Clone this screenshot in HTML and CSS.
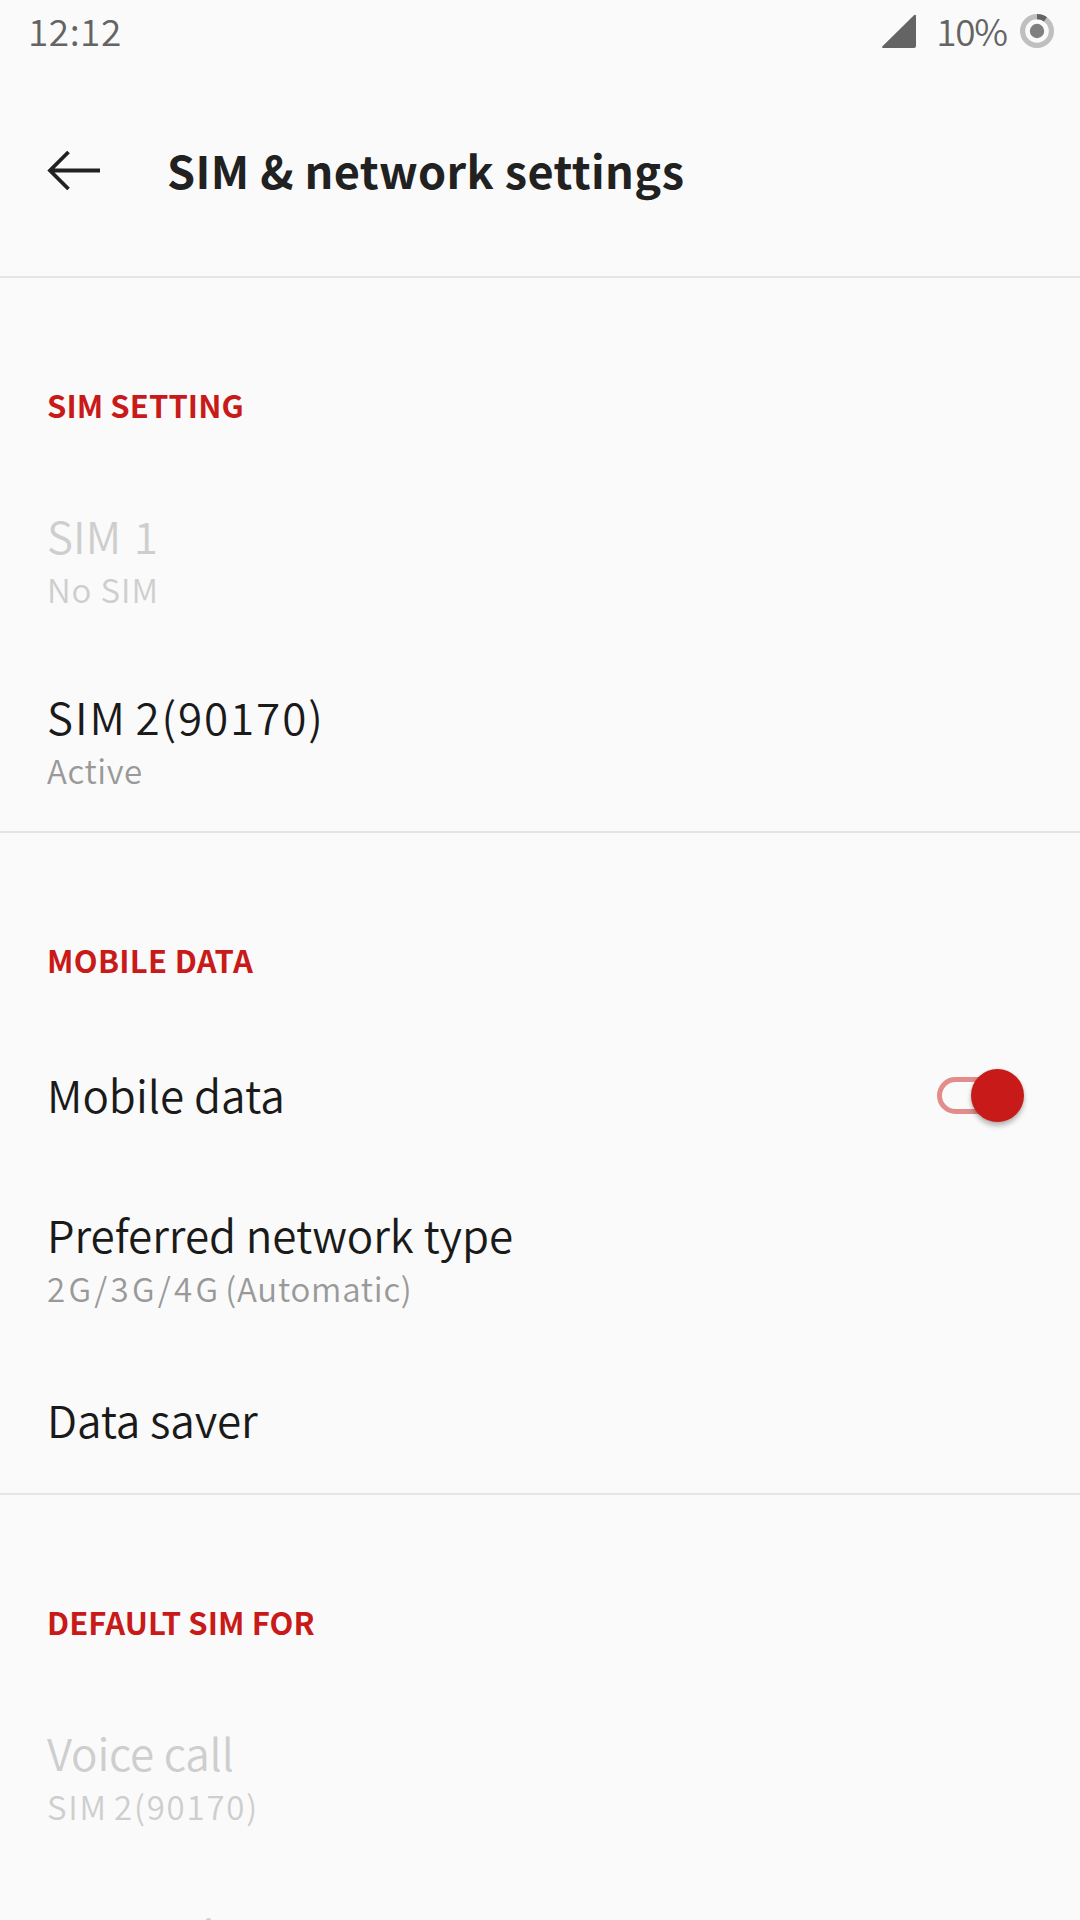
FILE: index.html
```html
<!DOCTYPE html>
<html lang="en">
<head>
<meta charset="utf-8">
<title>SIM &amp; network settings</title>
<link rel="stylesheet" href="styles.css">
</head>
<body>
<div class="screen">
  <div class="status-bar">
    <span class="clock">12:12</span>
    <div class="status-icons">
      <svg class="signal" width="36" height="36" viewBox="0 0 36 36"><path d="M33.2 1.1 L1.5 32.2 Q0.4 34 2.4 34 H33 Q35 34 35 32 V1.8 Q34.600 0 33.200 1.100 Z" fill="#646464"/></svg>
      <span class="percent">10%</span>
      <svg class="battery" width="34" height="34" viewBox="0 0 34 34">
        <circle cx="17" cy="17" r="14.400" fill="none" stroke="#bfbfbf" stroke-width="5.200"/>
        <path d="M17 2.600 A14.400 14.400 0 0 1 25.460 5.350" fill="none" stroke="#646464" stroke-width="5.200"/>
        <circle cx="17" cy="17" r="7.200" fill="#7f7f7f"/>
      </svg>
    </div>
  </div>

  <header class="app-bar">
    <svg class="back" width="54" height="42" viewBox="0 0 54 42"><path d="M3 21.500 H53 M21.500 3 L3 21.500 L21.500 40" fill="none" stroke="#212121" stroke-width="3.800"/></svg>
    <h1 class="page-title">SIM &amp; network settings</h1>
  </header>

  <section class="group">
    <h2 class="heading">SIM SETTING</h2>
    <div class="item disabled">
      <div class="label sim-slot">SIM 1</div>
      <div class="summary"><span class="sim-name">No SIM</span></div>
    </div>
    <div class="item">
      <div class="label sim-number">SIM 2(90170)</div>
      <div class="summary">Active</div>
    </div>
  </section>

  <section class="group">
    <h2 class="heading wide">MOBILE DATA</h2>
    <div class="item single">
      <div class="label">Mobile data</div>
      <div class="switch"><div class="track"></div><div class="thumb"></div></div>
    </div>
    <div class="item">
      <div class="label network">Preferred network type</div>
      <div class="summary"><span class="modes">2G/3G/4G</span> <span class="auto">(Automatic)</span></div>
    </div>
    <div class="item single">
      <div class="label saver">Data saver</div>
    </div>
  </section>

  <section class="group last">
    <h2 class="heading">DEFAULT SIM FOR</h2>
    <div class="item disabled">
      <div class="label voice">Voice call</div>
      <div class="summary sim-number">SIM 2(90170)</div>
    </div>
    <div class="item disabled">
      <div class="label messaging">Messaging</div>
    </div>
  </section>
</div>
</body>
</html>
```
FILE: styles.css
```css
* {
  box-sizing: border-box;
  margin: 0;
}

body {
  background: #fafafa;
  color: #1a1a1a;
  font-family: "Noto Sans CJK SC", "Noto Sans", sans-serif;
  font-weight: 350;
}

.screen {
  height: 1920px;
  overflow: hidden;
}

.status-bar {
  display: flex;
  justify-content: space-between;
  height: 60px;
  padding: 0 26px 0 28px;
  color: #646464;
  font-size: 37px;
  line-height: 60px;
}

.clock {
  letter-spacing: 0.5px;
}

.status-icons {
  display: flex;
}

.signal {
  margin: 14px 19px 0 0;
}

.percent {
  margin-right: 13px;
  letter-spacing: -1.2px;
}

.battery {
  margin-top: 14px;
}

.app-bar {
  display: flex;
  align-items: center;
  height: 218px;
  padding: 3px 47px 0;
  border-bottom: 2px solid #e5e5e5;
}

.page-title {
  margin-left: 66px;
  color: #212121;
  font-size: 45px;
  font-weight: 700;
  line-height: 60px;
  letter-spacing: 0.4px;
}

.group {
  padding: 103px 56px 0 47px;
  border-bottom: 2px solid #e5e5e5;
}

.group.last {
  border-bottom: 0;
}

.heading {
  margin: 0 0 40px;
  color: #c81a19;
  font-size: 31px;
  font-weight: 700;
  line-height: 48px;
  letter-spacing: 0.08px;
}

.heading.wide {
  letter-spacing: 0.3px;
}

.item {
  padding: 38px 0 35px;
}

.item.single {
  display: flex;
  align-items: center;
  justify-content: space-between;
  padding: 42px 0 46px;
}

.label {
  font-size: 44px;
  line-height: 56px;
  white-space: pre;
}

.network {
  letter-spacing: -0.06px;
}

.summary {
  color: #999;
  font-size: 33px;
  line-height: 52px;
  letter-spacing: 0.6px;
}

.disabled,
.disabled .summary {
  color: #cecece;
}

.sim-slot {
  word-spacing: 3px;
}

.sim-number {
  letter-spacing: 1.9px;
  word-spacing: -3px;
}

.summary.sim-number {
  letter-spacing: 1.8px;
  word-spacing: -3px;
}

.sim-name {
  letter-spacing: 0.9px;
}

.modes {
  letter-spacing: 3.3px;
}

.auto {
  margin-left: -4px;
  letter-spacing: 0.75px;
}

.saver {
  letter-spacing: -0.1px;
}

.voice {
  letter-spacing: -0.2px;
}

.messaging {
  letter-spacing: 1px;
}

.switch {
  position: relative;
  width: 87px;
  height: 53px;
  margin-top: 2px;
}

.track {
  width: 70px;
  height: 37px;
  margin-top: 8px;
  border: 5px solid #e28c8c;
  border-radius: 19px;
}

.thumb {
  position: absolute;
  top: 0;
  right: 0;
  width: 53px;
  height: 53px;
  border-radius: 50%;
  background: #c81a19;
  box-shadow: 0 4px 5px rgba(0, 0, 0, 0.26), 0 0 3px rgba(0, 0, 0, 0.12);
}
```
